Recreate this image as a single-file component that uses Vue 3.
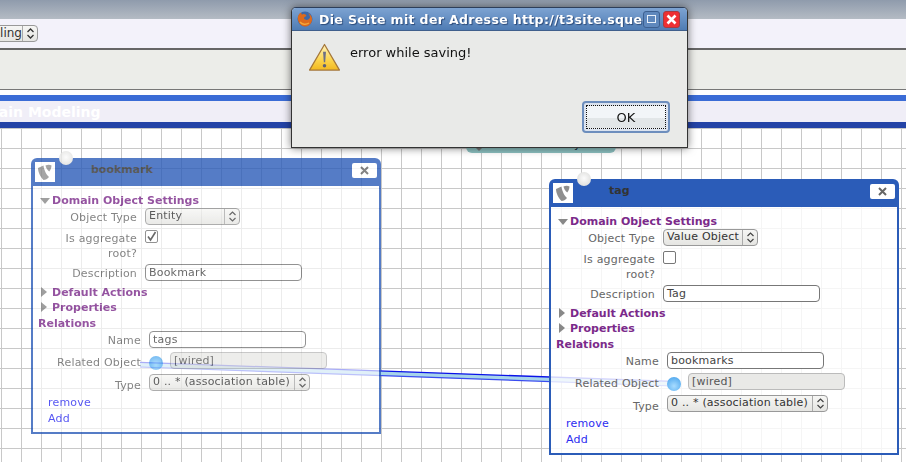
<script setup>
const windows = [
  { id: 'a', cls: 'win-a', title: 'bookmark', type: 'Entity', checked: true, desc: 'Bookmark', rel: 'tags' },
  { id: 'b', cls: 'win-b', title: 'tag', type: 'Value Object', checked: false, desc: 'Tag', rel: 'bookmarks' }
]
</script>

<template>
  <div class="page">
    <div class="topband"></div>
    <div class="toolbar">
      <div class="sel mod-sel">
        <span class="sel-text">Domain Modeling</span>
        <span class="stepper"><svg width="9" height="13" viewBox="0 0 9 13"><path d="M1.5 5 4.5 2 7.5 5M1.5 8 4.5 11 7.5 8" fill="none" stroke="#333" stroke-width="1.3"/></svg></span>
      </div>
    </div>
    <div class="strip"></div>
    <div class="tabline"></div>
    <div class="heading"><span class="heading-text">Domain Modeling</span></div>
    <div class="tabline2"></div>

    <div class="canvas">
      <div class="teal">
        <svg class="teal-tri" width="10" height="5" viewBox="0 0 10 5"><path d="M0 0H10L5 5Z" fill="#777"/></svg>
        <span class="teal-y">y</span>
      </div>
      <svg class="wires" width="906" height="334" viewBox="0 128 906 334">
        <polygon points="140,362.4 673,381.4 673,386 140,367" fill="#a6d4ea"/>
        <line x1="140" y1="362.4" x2="673" y2="381.4" stroke="#0a12e8" stroke-width="1.3"/>
        <line x1="140" y1="367" x2="673" y2="386" stroke="#3a4cf0" stroke-width="1.2"/>
      </svg>

      <section v-for="w in windows" :key="w.id" class="win" :class="w.cls">
        <span class="term-top"></span>
        <header class="win-head">
          <span class="logo">
            <svg width="20" height="20" viewBox="0 0 20 20">
              <path d="M3 6 8.500 3.500C9 8 11.500 13 14 15 12.500 17 10.500 18 8.500 18 5.500 15 3 10 3 6Z" fill="#8f8f8f"/>
              <path d="M10.500 3.500C12.500 2.500 15 2.500 16.500 3.500 16.500 5.500 15.500 8 14.200 9.500 12.300 8 10.800 5.500 10.500 3.500Z" fill="#8f8f8f"/>
            </svg>
          </span>
          <span class="win-title">{{ w.title }}</span>
          <span class="close">
            <svg width="9" height="9" viewBox="0 0 9 9"><path d="M1 1 8 8M8 1 1 8" stroke="#666" stroke-width="2"/></svg>
          </span>
        </header>

        <div class="win-body">
          <div class="sec sec-open"><i class="tri-down"></i>Domain Object Settings</div>
          <div class="row row-type">
            <label>Object Type</label>
            <div class="sel type-sel">
              <span class="sel-text">{{ w.type }}</span>
              <span class="stepper"><svg width="9" height="13" viewBox="0 0 9 13"><path d="M1.500 5 4.500 2 7.500 5M1.500 8 4.500 11 7.500 8" fill="none" stroke="#444" stroke-width="1.200"/></svg></span>
            </div>
          </div>
          <div class="row row-agg">
            <label>Is aggregate<br>root?</label>
            <span class="check">
              <svg v-if="w.checked" width="11" height="11" viewBox="0 0 11 11"><path d="M2 5.500 4.500 9 9.500 1" fill="none" stroke="#444" stroke-width="1.600"/></svg>
            </span>
          </div>
          <div class="row row-desc">
            <label>Description</label>
            <div class="inp">{{ w.desc }}</div>
          </div>
          <div class="sec"><i class="tri-right"></i>Default Actions</div>
          <div class="sec"><i class="tri-right"></i>Properties</div>
          <div class="sec sec-plain">Relations</div>

          <div class="rel">
            <div class="row rel-name">
              <label>Name</label>
              <div class="inp">{{ w.rel }}</div>
            </div>
            <div class="row rel-obj">
              <label>Related Object</label>
              <div class="obj-field">
                <span class="term-blue"></span>
                <div class="inp inp-off">[wired]</div>
              </div>
            </div>
            <div class="row rel-type">
              <label>Type</label>
              <div class="sel assoc-sel">
                <span class="sel-text">0 .. * (association table)</span>
                <span class="stepper"><svg width="9" height="13" viewBox="0 0 9 13"><path d="M1.500 5 4.500 2 7.500 5M1.500 8 4.500 11 7.500 8" fill="none" stroke="#444" stroke-width="1.200"/></svg></span>
              </div>
            </div>
          </div>
          <a class="link link-remove">remove</a>
          <a class="link">Add</a>
        </div>
      </section>
    </div>

    <div class="dialog">
      <div class="dlg-title">
        <svg class="fx" width="18" height="18" viewBox="0 0 18 18">
          <circle cx="9" cy="9" r="7.500" fill="#3f69a8"/>
          <path d="M2 10C1 6 3.500 3 5.500 2.500 5 4 5.500 4.500 6.500 4.500 8 3.500 10 4.500 10.500 6 9 6.500 8 7 8 8.500 10 11 13 10 14 7.500 14 6 13 4 12 3 15 4.500 16.500 7.500 16 10.500 15 14.500 12 16.500 9 16.500 5.500 16.500 2.800 13.500 2 10Z" fill="#dd6a1c"/>
          <path d="M4 12C6 14.500 10 15 13 13" fill="none" stroke="#f4a63a" stroke-width="1.400"/>
        </svg>
        <span class="dlg-text">Die Seite mit der Adresse http://t3site.squeeze</span>
        <span class="wbtn wbtn-max"><i></i></span>
        <span class="wbtn wbtn-close">
          <svg width="11" height="11" viewBox="0 0 11 11"><path d="M1.500 1.500 9.500 9.500M9.500 1.500 1.500 9.500" stroke="#fff" stroke-width="2.600"/></svg>
        </span>
      </div>
      <div class="dlg-body">
        <div class="dlg-msg">
          <svg class="warn-icon" width="33" height="29" viewBox="0 0 34 30">
            <defs>
              <linearGradient id="warn" x1="0" y1="0" x2="0" y2="1">
                <stop offset="0" stop-color="#fff3c0"/>
                <stop offset="0.600" stop-color="#fcd54e"/>
                <stop offset="1" stop-color="#f2b820"/>
              </linearGradient>
            </defs>
            <path d="M17 1.500 32.500 28H1.500Z" fill="url(#warn)" stroke="#a5773a" stroke-width="1.300" stroke-linejoin="round"/>
            <path d="M15.500 9H18.500L17.700 20H16.300Z" fill="#6d6f86"/>
            <circle cx="17" cy="23.500" r="1.800" fill="#5d6078"/>
          </svg>
          <span class="msg">error while saving!</span>
        </div>
        <div class="dlg-actions">
          <button class="ok"><span>OK</span></button>
        </div>
      </div>
    </div>
  </div>
</template>

<style>
html, body { margin: 0; padding: 0; background: #fff; }
</style>

<style scoped>
.page {
  width: 906px; height: 462px; position: relative; overflow: hidden;
  display: flex; flex-direction: column;
  font-family: "DejaVu Sans", sans-serif; font-size: 11px; background: #fff;
}
.topband { height: 19px; flex: none; background: linear-gradient(#8f9bac, #b4bbc4); }
.toolbar { height: 29px; flex: none; background: #f3f2fa; display: flex; align-items: center; }
.strip { height: 39px; flex: none; background: #ecede9; border-top: 2px solid #666; border-bottom: 1px solid #777; }
.tabline { height: 11px; flex: none; box-sizing: border-box; border-top: 5px solid #fff; background: #3b6cd6; }
.heading { height: 21px; flex: none; background: #f0eef7; overflow: hidden; display: flex; align-items: center; }
.heading-text { font-weight: bold; font-size: 14px; color: #fff; margin-left: -37px; white-space: nowrap; }
.tabline2 { height: 6px; flex: none; background: #2443a6; }

.canvas {
  position: relative; flex: 1; min-height: 0;
  background-color: #fff;
  background-image:
    linear-gradient(#c8c8c8 1px, transparent 1px),
    linear-gradient(90deg, #c8c8c8 1px, transparent 1px);
  background-size: 20px 20px;
  background-position: 1px 0;
}
.wires { position: absolute; left: 0; top: 0; }
.teal { position: absolute; left: 466px; top: 0; width: 150px; height: 25px; background: #8cc0c0; border-radius: 0 0 6px 6px; overflow: hidden; }
.teal-tri { position: absolute; left: 8px; top: 18px; }
.teal-y { position: absolute; left: 108px; top: 10px; font-size: 11px; color: #123; }

.sel {
  display: flex; box-sizing: border-box; height: 17px; border: 1px solid #999; border-radius: 4px;
  background: linear-gradient(#f6f6f4, #e5e5e2); color: #333; line-height: 14px; white-space: nowrap; letter-spacing: .2px;
}
.sel-text { flex: 1; min-width: 0; padding-left: 3px; border-right: 1px solid #aaa; overflow: hidden; }
.stepper { width: 14px; flex: none; display: flex; align-items: center; justify-content: center; }
.mod-sel { width: 125px; margin-left: -87px; font-size: 12px; letter-spacing: 0; }

.win { position: absolute; width: 350px; height: 276px; box-sizing: border-box; display: flex; flex-direction: column; color: #555; }
.win-a { left: 31px; top: 30px; opacity: .8; }
.win-b { left: 549px; top: 51px; }
.term-top {
  position: absolute; left: 28px; top: -7px; width: 14px; height: 14px; border-radius: 50%;
  background: radial-gradient(circle at 50% 45%, #fbfbfb, #e2e2e0 70%, #bdbdbd);
}
.win-head {
  height: 28px; flex: none; box-sizing: border-box; background: #2b5cb8; border-radius: 6px 6px 0 0;
  display: flex; align-items: center; padding: 0 4px 0 4px;
}
.logo { width: 20px; height: 20px; flex: none; background: #fff; display: block; }
.logo svg { display: block; }
.win-title { flex: 1; margin-left: 36px; margin-bottom: 6px; font-weight: bold; font-size: 11px; color: #333; }
.close {
  width: 25px; height: 15px; background: #fff; border-radius: 2px; margin-bottom: 4px;
  display: flex; align-items: center; justify-content: center;
}
.win-body {
  flex: 1; box-sizing: border-box; background: rgba(255, 255, 255, .82);
  border: 2px solid #2b5cb8; border-top: 0; padding: 7px 0 0 5px;
}
.sec {
  height: 15px; line-height: 15px; font-weight: bold; color: #7b2a8a; font-size: 11px;
  display: flex; align-items: center; padding: 0 0 0 14px; box-sizing: border-box;
  position: relative; white-space: nowrap;
}
.sec-plain { padding-left: 0; height: 16px; }
.tri-down, .tri-right { position: absolute; width: 0; height: 0; }
.tri-down { left: 2px; top: 5px; border: 5px solid transparent; border-top: 6px solid #888; border-bottom: 0; }
.tri-right { left: 3px; top: 2px; border: 5px solid transparent; border-left: 6px solid #888; border-right: 0; }

.row { display: grid; grid-template-columns: 99px 1fr; column-gap: 8px; }
.row label { text-align: right; white-space: nowrap; line-height: 15px; color: #666; letter-spacing: .2px; }
.row-type { height: 21px; }
.row-type label { padding-top: 2px; }
.type-sel { width: 95px; }
.row-agg { height: 34px; padding-top: 1px; box-sizing: border-box; }
.row-agg label { padding-top: 1px; }
.check {
  display: flex; align-items: center; justify-content: center; box-sizing: border-box;
  width: 13px; height: 13px; border: 1px solid #777; border-radius: 2px; background: #fff;
}
.row-desc { height: 22px; padding-top: 1px; box-sizing: border-box; }
.row-desc label { padding-top: 2px; }
.inp {
  box-sizing: border-box; width: 157px; height: 17px; border: 1px solid #777; border-radius: 4px;
  background: #fff; padding-left: 3px; line-height: 15px; color: #444; letter-spacing: .2px;
}
.inp-off { background: #e9e9e7; border-color: #bbb; color: #555; }
.rel .row { grid-template-columns: 103px 1fr; }
.rel-name { height: 21px; }
.rel-name label { padding-top: 2px; }
.rel-obj { height: 22px; }
.rel-obj label { padding-top: 3px; }
.obj-field { display: flex; gap: 7px; }
.term-blue {
  width: 14px; height: 14px; margin-top: 4px; flex: none; border-radius: 50%;
  background: radial-gradient(circle at 50% 65%, #a8dcff, #5aaef0 75%, #4a90d8);
}
.rel-type { height: 20px; }
.rel-type label { padding-top: 4px; }
.assoc-sel { width: 161px; }
.link { display: block; height: 16px; line-height: 16px; padding-left: 10px; color: #2c2cf0; letter-spacing: .2px; }
.link-remove { margin-top: 1px; }

.dialog {
  position: absolute; left: 291px; top: 7px; width: 397px; height: 141px; box-sizing: border-box;
  display: flex; flex-direction: column; border: 1px solid #333; border-top-color: #2d3e5a; border-radius: 5px 5px 0 0;
  background: #e9eae8; box-shadow: 0 0 8px rgba(0, 0, 0, .55);
}
.dlg-title {
  height: 22px; flex: none; display: flex; align-items: center; padding: 0 3px 0 4px;
  background: linear-gradient(#7da3d2, #4f7cb4); border-radius: 4px 4px 0 0; border-bottom: 1px solid #3f5f8c;
}
.fx { flex: none; }
.dlg-text {
  width: 324px; flex: none; margin-left: 5px; overflow: hidden; white-space: nowrap;
  color: #fff; font-weight: bold; font-size: 12.500px; letter-spacing: .35px; text-shadow: 1px 1px 1px #2c4a78;
}
.wbtn {
  width: 17px; height: 17px; flex: none; margin-left: 3px; box-sizing: border-box; border-radius: 3px;
  display: flex; align-items: center; justify-content: center;
}
.wbtn-max { background: #5f88bd; border: 1px solid #3c5f90; margin-left: 0; }
.wbtn-max i { display: block; width: 7px; height: 6px; border: 1px solid #e8f0fa; }
.wbtn-close { background: #ee2f33; border: 1px solid #a83a40; }
.dlg-body { flex: 1; display: flex; flex-direction: column; justify-content: space-between; }
.dlg-msg { display: flex; align-items: flex-start; padding: 13px 0 0 16px; }
.warn-icon { margin-top: -1px; }
.msg { margin-left: 9px; margin-top: 1px; font-size: 13px; color: #111; line-height: 16px; }
.dlg-actions { display: flex; justify-content: flex-end; padding: 0 17px 14px 0; }
.ok {
  width: 88px; height: 32px; box-sizing: border-box; padding: 2px; font: inherit; font-size: 13px; color: #111;
  background: #dbe3ef; border: 2px solid #6d8ebd; border-radius: 4px; display: flex;
}
.ok span {
  flex: 1; display: flex; align-items: center; justify-content: center;
  border: 1px dotted #111; background: linear-gradient(#f2f5f8 55%, #e2e6e8 55%);
}
</style>
